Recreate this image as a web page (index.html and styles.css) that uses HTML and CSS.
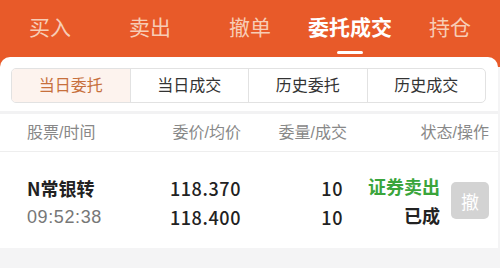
FILE: index.html
```html
<!DOCTYPE html>
<html lang="zh">
<head>
  <meta charset="UTF-8" />
  <meta name="viewport" content="width=device-width, initial-scale=1.0"/>
  <title>委托成交</title>
  <link rel="stylesheet" href="styles.css">
</head>
<body>

  <!-- Top tabs -->
  <div class="top-tabs">
    <div class="top-tab">买入</div>
    <div class="top-tab">卖出</div>
    <div class="top-tab">撤单</div>
    <div class="top-tab active">委托成交</div>
    <div class="top-tab">持仓</div>
  </div>

  <div class="panel">
    <div class="segments-wrap">
      <div class="segments">
        <div class="segment active">当日委托</div>
        <div class="segment">当日成交</div>
        <div class="segment">历史委托</div>
        <div class="segment">历史成交</div>
      </div>
    </div>

    <div class="table-head">
      <div class="col-name">股票/时间</div>
      <div class="col-price">委价/均价</div>
      <div class="col-qty">委量/成交</div>
      <div class="col-status">状态/操作</div>
    </div>

    <div class="order-row">
      <div class="col-name">
        <div class="stock-name">N常银转</div>
        <div class="order-time">09:52:38</div>
      </div>
      <div class="col-price num">
        <div>118.370</div>
        <div>118.400</div>
      </div>
      <div class="col-qty num">
        <div>10</div>
        <div>10</div>
      </div>
      <div class="col-status status-cell">
        <div class="status-text">
          <div class="sell">证券卖出</div>
          <div class="done">已成</div>
        </div>
        <button class="cancel-btn" disabled>撤</button>
      </div>
    </div>
  </div>

</body>
</html>
```

FILE: styles.css
```css
body {
  margin: 0;
  font-family: "Liberation Sans", "Noto Sans CJK SC", sans-serif;
  background: #f4f4f5;
  color: #222;
}

.top-tabs {
  display: flex;
  background: #e85a29;
  height: 67px;
}

.top-tab {
  flex: 1;
  position: relative;
  text-align: center;
  font-size: 21px;
  line-height: 56px;
  color: #f7cdb6;
}

.top-tab.active {
  color: #ffffff;
  font-weight: bold;
}

.top-tab.active::after {
  content: "";
  position: absolute;
  left: 50%;
  top: 51px;
  width: 26px;
  height: 3px;
  margin-left: -13px;
  border-radius: 2px;
  background: #ffffff;
}

.panel {
  margin-top: -10px;
  margin-right: 2px;
  background: #ffffff;
  border-radius: 10px 10px 0 0;
}

.segments-wrap {
  padding: 11px 12px 8px 11px;
  border-bottom: 3px solid #f2f2f3;
}

.segments {
  display: flex;
  border: 1px solid #e2e2e2;
  border-radius: 5px;
  overflow: hidden;
}

.segment {
  flex: 1;
  height: 33px;
  line-height: 33px;
  text-align: center;
  font-size: 16px;
  color: #333;
  border-left: 1px solid #e2e2e2;
}

.segment:first-child {
  border-left: none;
}

.segment.active {
  background: #fdf3ee;
  color: #c7703c;
}

.table-head,
.order-row {
  display: grid;
  grid-template-columns: 103px 111px 106px 142px;
  padding-left: 27px;
}

.table-head {
  height: 37px;
  line-height: 37px;
  font-size: 16px;
  color: #888;
  border-bottom: 1px solid #eeeeee;
}

.col-price,
.col-qty,
.col-status {
  text-align: right;
}

.order-row {
  height: 96px;
  align-content: center;
  padding-top: 5px;
  box-sizing: border-box;
  font-size: 18px;
  line-height: 29px;
}

.stock-name {
  font-family: "Noto Sans CJK SC", sans-serif;
  font-weight: 600;
  color: #222;
}

.order-time {
  color: #777;
  letter-spacing: 0.6px;
}

.num {
  font-family: "Noto Sans CJK SC", sans-serif;
  font-weight: 500;
  color: #222;
  letter-spacing: 0.6px;
}

.col-qty.num {
  padding-right: 4px;
}

.status-cell {
  display: flex;
  justify-content: flex-end;
  align-items: center;
  gap: 11px;
}

.sell {
  color: #3aa53b;
  font-weight: bold;
}

.done {
  color: #222;
  font-weight: bold;
}

.cancel-btn {
  width: 38px;
  height: 37px;
  margin-top: -4px;
  border: none;
  border-radius: 5px;
  background: #d3d3d3;
  color: #ffffff;
  font-family: "Noto Sans CJK SC", sans-serif;
  font-size: 18px;
  padding: 0;
}
```
